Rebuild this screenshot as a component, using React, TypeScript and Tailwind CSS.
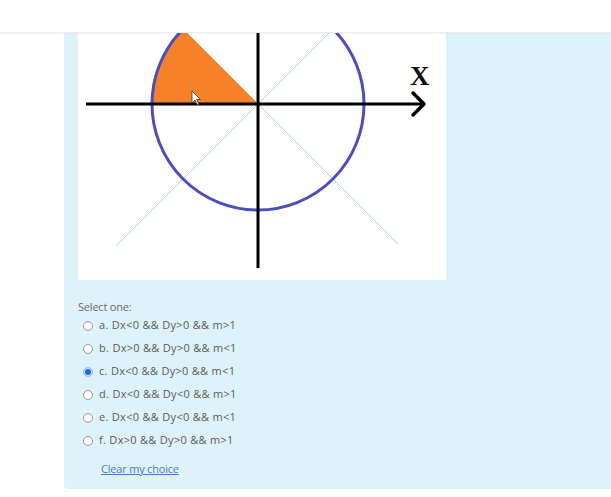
import React from "react";

const options = [
  "a. Dx<0 && Dy>0 && m>1",
  "b. Dx>0 && Dy>0 && m<1",
  "c. Dx<0 && Dy>0 && m<1",
  "d. Dx<0 && Dy<0 && m>1",
  "e. Dx<0 && Dy<0 && m<1",
  "f. Dx>0 && Dy>0 && m>1",
];

const Diagram = () => (
  <svg width="368" height="247" viewBox="0 0 368 247" className="block">
    <line x1="38" y1="213" x2="320" y2="-69" stroke="#a9d8b6" strokeWidth="1" />
    <line x1="40" y1="-69" x2="320" y2="211" stroke="#a9d8b6" strokeWidth="1" />
    {/* shaded sector between 135 and 180 degrees */}
    <path d="M180 71 L74 71 A106 106 0 0 1 105 -4 Z" fill="#f5822a" stroke="#c9a24a" strokeWidth="0.8" />
    <circle cx="180" cy="71" r="106" fill="none" stroke="#4a4fbd" strokeWidth="3" />
    <line x1="8" y1="71" x2="345" y2="71" stroke="#000" strokeWidth="3" />
    <polyline points="335,60 346,71 335,82" fill="none" stroke="#000" strokeWidth="3.5" strokeLinecap="round" strokeLinejoin="round" />
    <line x1="180" y1="0" x2="180" y2="235" stroke="#000" strokeWidth="3" />
    <text x="332" y="52" fontFamily="'Liberation Serif', serif" fontWeight="700" fontSize="27" fill="#111">
      X
    </text>
    {/* mouse pointer */}
    <path d="M114 58 L114 70 L117 67 L119.5 72 L121 71.3 L118.7 66.5 L122.5 66.5 Z" fill="#fff" stroke="#333" strokeWidth="0.8" />
  </svg>
);

const Radio = ({ checked }: { checked?: boolean }) =>
  checked ? (
    <span className="flex h-[10px] w-[10px] items-center justify-center rounded-full border border-[#8fb6ec] bg-[#cfe2fb]">
      <span className="h-[6px] w-[6px] rounded-full bg-[#1a6fe0]" />
    </span>
  ) : (
    <span className="h-[10px] w-[10px] rounded-full border border-[#9a9a9a] bg-white" />
  );

export default function App() {
  return (
    <div className="h-[497px] w-[611px] overflow-hidden bg-white font-['Open_Sans',sans-serif]">
      <div className="relative z-10 h-[33px] border-b border-[#ececec] bg-white shadow-[0_1px_2px_rgba(0,0,0,0.04)]" />
      <div className="flex pl-[64px]">
        <div className="h-[456px] flex-1 rounded-bl-[4px] bg-[#def3f9] pl-[14px]">
          <div className="w-[368px] bg-white">
            <Diagram />
          </div>
          <div className="mt-[19px] h-[15px] text-[11px] leading-[15px] tracking-[-0.2px] text-[#6a6a6a]">Select one:</div>
          <div className="flex flex-col">
            {options.map((o, i) => (
              <div key={o} className="flex h-[23px] items-center pl-[5px]">
                <Radio checked={i === 2} />
                <span className="ml-[6px] text-[11px] tracking-[0.3px] text-[#5b5b5b]">{o}</span>
              </div>
            ))}
          </div>
          <a href="#" className="ml-[23px] mt-[9px] block w-fit text-[11px] leading-[16px] tracking-[-0.2px] text-[#4a7cc4] underline">
            Clear my choice
          </a>
        </div>
      </div>
    </div>
  );
}
